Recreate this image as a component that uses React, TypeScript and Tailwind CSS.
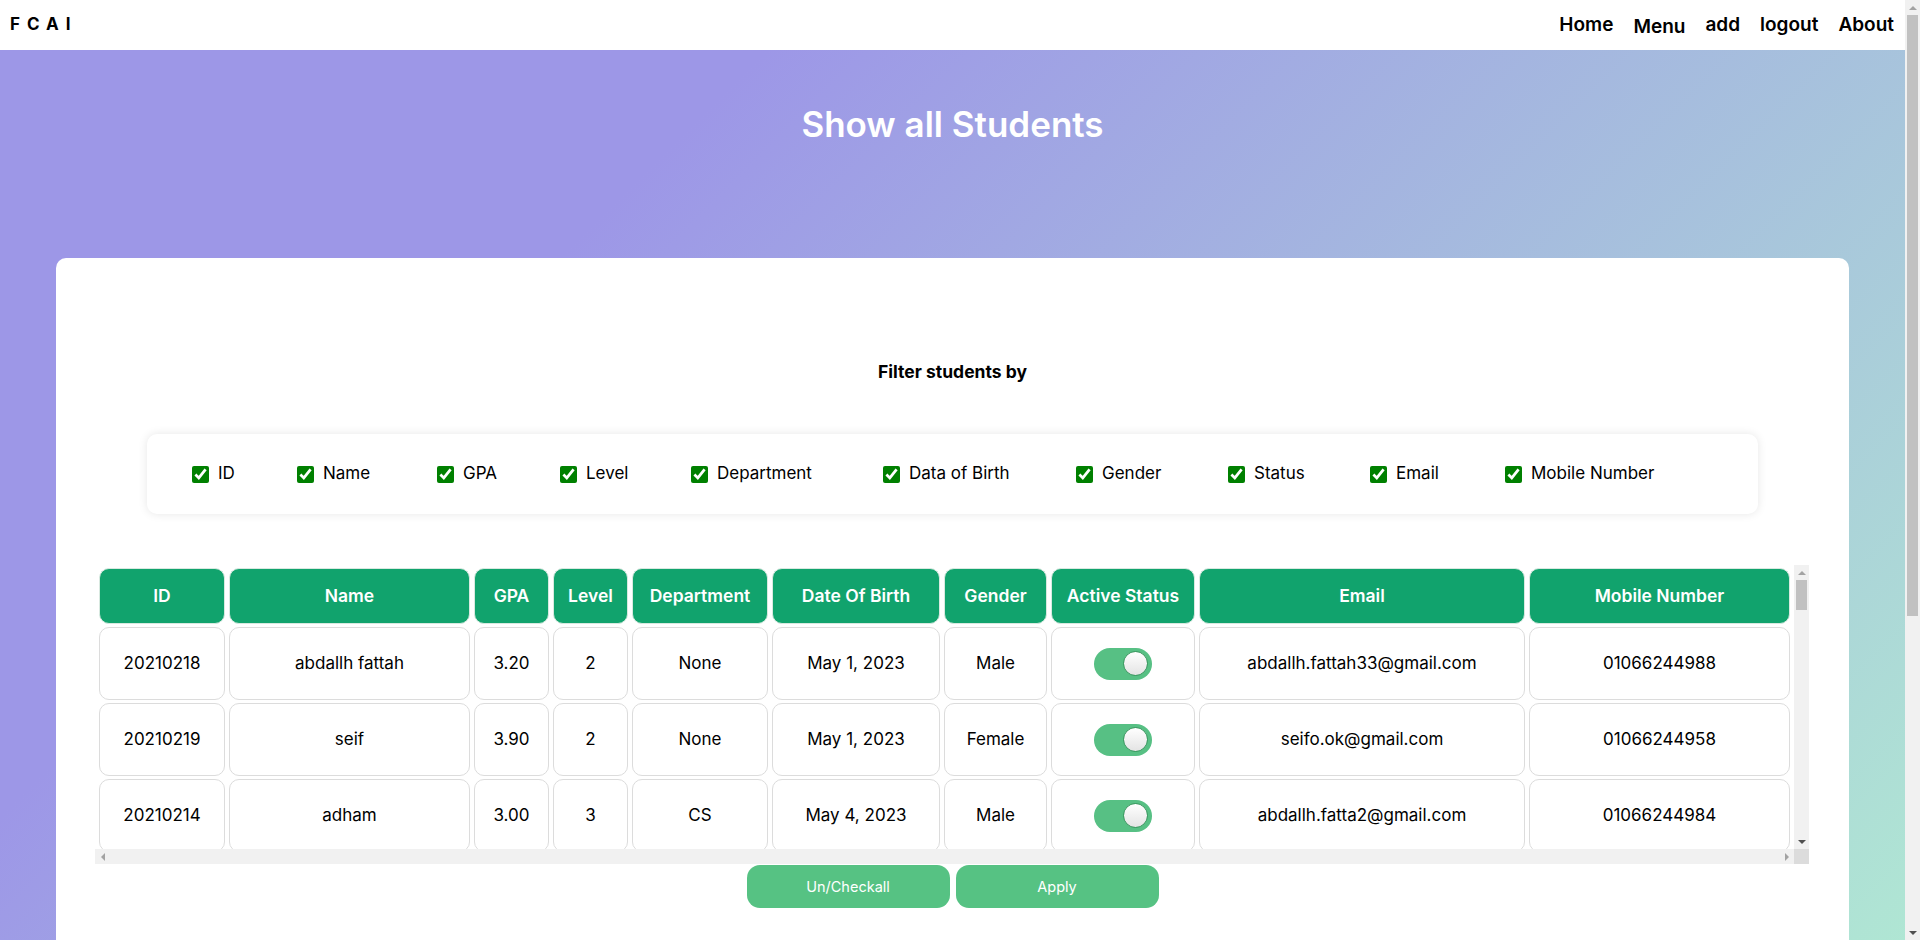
import React from "react";

type Student = {
  id: string;
  name: string;
  gpa: string;
  level: string;
  dept: string;
  dob: string;
  gender: string;
  email: string;
  mobile: string;
};

const students: Student[] = [
  { id: "20210218", name: "abdallh fattah", gpa: "3.20", level: "2", dept: "None", dob: "May 1, 2023", gender: "Male", email: "abdallh.fattah33@gmail.com", mobile: "01066244988" },
  { id: "20210219", name: "seif", gpa: "3.90", level: "2", dept: "None", dob: "May 1, 2023", gender: "Female", email: "seifo.ok@gmail.com", mobile: "01066244958" },
  { id: "20210214", name: "adham", gpa: "3.00", level: "3", dept: "CS", dob: "May 4, 2023", gender: "Male", email: "abdallh.fatta2@gmail.com", mobile: "01066244984" },
];

const filters: { label: string; w: string }[] = [
  { label: "ID", w: "w-[105px]" },
  { label: "Name", w: "w-[140px]" },
  { label: "GPA", w: "w-[123px]" },
  { label: "Level", w: "w-[131px]" },
  { label: "Department", w: "w-[192px]" },
  { label: "Data of Birth", w: "w-[193px]" },
  { label: "Gender", w: "w-[152px]" },
  { label: "Status", w: "w-[142px]" },
  { label: "Email", w: "w-[135px]" },
  { label: "Mobile Number", w: "w-auto" },
];

const cols: { label: string; w: string }[] = [
  { label: "ID", w: "w-[126px]" },
  { label: "Name", w: "w-[241px]" },
  { label: "GPA", w: "w-[75px]" },
  { label: "Level", w: "w-[75px]" },
  { label: "Department", w: "w-[136px]" },
  { label: "Date Of Birth", w: "w-[168px]" },
  { label: "Gender", w: "w-[103px]" },
  { label: "Active Status", w: "w-[144px]" },
  { label: "Email", w: "w-[326px]" },
  { label: "Mobile Number", w: "w-[261px]" },
];

function Arrow({ dir, dark }: { dir: "up" | "down" | "left" | "right"; dark?: boolean }) {
  const pts: Record<string, string> = {
    up: "0,5 4,1 8,5",
    down: "0,1 4,5 8,1",
    left: "5,0 1,4 5,8",
    right: "1,0 5,4 1,8",
  };
  const vertical = dir === "up" || dir === "down";
  return (
    <svg width={vertical ? 8 : 6} height={vertical ? 6 : 8} viewBox={vertical ? "0 0 8 6" : "0 0 6 8"}>
      <polygon points={pts[dir]} fill={dark ? "#505050" : "#a3a3a3"} />
    </svg>
  );
}

function Toggle() {
  return (
    <div className="inline-flex w-[58px] h-[32px] rounded-full bg-[#57c084] items-center justify-end pr-[4px] align-middle">
      <div className="w-[25px] h-[25px] rounded-full border border-[#3b9760] bg-[linear-gradient(180deg,#ffffff_0%,#e4e4e4_100%)]" />
    </div>
  );
}

const td = "h-[73px] p-0 border border-[#dcdcdc] rounded-[10px] bg-white text-center text-[17px] text-black";

export default function App() {
  return (
    <div className="flex w-full items-start font-['Inter',sans-serif]">
      <div className="flex-1 min-h-[1425px] bg-[linear-gradient(135deg,#9d97e7_24.5%,#b4f9cf_100%)] flex flex-col">
        <nav className="h-[50px] bg-white flex items-center justify-between pl-[10px] pr-[11px]">
          <div className="text-[17px] font-bold tracking-[7px] text-black">FCAI</div>
          <div className="flex items-center gap-[20px] text-[19px] font-semibold text-black">
            <span>Home</span>
            <span className="translate-y-[2px]">Menu</span>
            <span>add</span>
            <span>logout</span>
            <span>About</span>
          </div>
        </nav>

        <div className="h-[208px] pt-[47px] flex justify-center">
          <h1 className="text-[35px] leading-[54px] font-semibold text-white">Show all Students</h1>
        </div>

        <div className="mx-[56px] bg-white rounded-[10px] pt-[101px] pb-[490px] flex flex-col">
          <div className="text-center text-[17.5px] leading-[25px] font-bold text-black">Filter students by</div>

          <div className="mt-[50px] mx-auto w-[1611px] h-[80px] rounded-[10px] bg-white shadow-[0_0_10px_rgba(0,0,0,0.1)] flex items-center pl-[45px]">
            {filters.map((f) => (
              <label key={f.label} className={`${f.w} shrink-0 flex items-center gap-[9px] text-[17px] text-black`}>
                <input type="checkbox" checked readOnly className="w-[17px] h-[17px] m-0 accent-[#008000]" />
                <span>{f.label}</span>
              </label>
            ))}
          </div>

          <div className="mt-[51px] ml-[39px] w-[1714px] h-[299px] grid grid-cols-[1699px_15px] grid-rows-[284px_15px]">
            <div className="overflow-hidden">
              <table className="table-fixed border-separate border-spacing-x-[4px] border-spacing-y-[3px] w-[1699px]">
                <colgroup>
                  {cols.map((c) => (
                    <col key={c.label} className={c.w} />
                  ))}
                </colgroup>
                <thead>
                  <tr>
                    {cols.map((c) => (
                      <th
                        key={c.label}
                        className="h-[56px] p-0 bg-[#11a36d] border border-[#d8e9e0] rounded-[10px] text-white text-[17.5px] font-semibold text-center"
                      >
                        {c.label}
                      </th>
                    ))}
                  </tr>
                </thead>
                <tbody>
                  {students.map((s) => (
                    <tr key={s.id}>
                      <td className={td}>{s.id}</td>
                      <td className={td}>{s.name}</td>
                      <td className={td}>{s.gpa}</td>
                      <td className={td}>{s.level}</td>
                      <td className={td}>{s.dept}</td>
                      <td className={td}>{s.dob}</td>
                      <td className={td}>{s.gender}</td>
                      <td className={td}>
                        <Toggle />
                      </td>
                      <td className={td}>{s.email}</td>
                      <td className={td}>{s.mobile}</td>
                    </tr>
                  ))}
                </tbody>
              </table>
            </div>
            {/* vertical scrollbar */}
            <div className="bg-[#f1f1f1] flex flex-col items-center">
              <div className="h-[15px] flex items-center justify-center">
                <Arrow dir="up" />
              </div>
              <div className="w-[11px] h-[30px] bg-[#c1c1c1]" />
              <div className="flex-1" />
              <div className="h-[15px] flex items-center justify-center">
                <Arrow dir="down" dark />
              </div>
            </div>
            {/* horizontal scrollbar */}
            <div className="bg-[#f1f1f1] flex items-center justify-between">
              <div className="w-[15px] flex items-center justify-center">
                <Arrow dir="left" />
              </div>
              <div className="w-[15px] flex items-center justify-center">
                <Arrow dir="right" />
              </div>
            </div>
            <div className="bg-[#dcdcdc]" />
          </div>

          <div className="mt-[1px] flex justify-center gap-[6px]">
            <button className="w-[203px] h-[43px] rounded-[13px] bg-[#56c283] text-white text-[14.5px]">Un/Checkall</button>
            <button className="w-[203px] h-[43px] rounded-[13px] bg-[#56c283] text-white text-[14.5px]">Apply</button>
          </div>
        </div>
        <div className="h-[30px]" />
      </div>

      {/* page scrollbar */}
      <div className="w-[15px] h-[940px] shrink-0 bg-[#f1f1f1] flex flex-col items-center">
        <div className="h-[15px] flex items-center justify-center">
          <Arrow dir="up" />
        </div>
        <div className="w-[11px] h-[601px] bg-[#c1c1c1]" />
        <div className="flex-1" />
        <div className="h-[15px] flex items-center justify-center">
          <Arrow dir="down" dark />
        </div>
      </div>
    </div>
  );
}
